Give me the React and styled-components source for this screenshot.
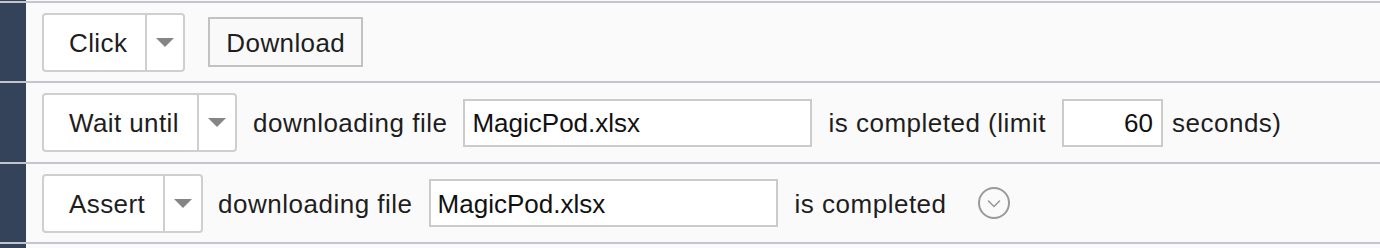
import React from "react";
import styled, { createGlobalStyle } from "styled-components";

const Global = createGlobalStyle`
  html, body { margin: 0; padding: 0; background: #fafafa; }
  body { font-family: "Liberation Sans", Arial, sans-serif; color: #222; overflow: hidden; }
`;

const Page = styled.div`
  display: flex;
  flex-direction: column;
  width: 1380px;
  height: 248px;
  overflow: hidden;
  background: #fafafa;
`;

const Row = styled.div`
  display: flex;
  flex: none;
  height: ${(p) => p.$h}px;
  box-sizing: border-box;
  border-top: ${(p) => (p.$line ? "2px solid #c3c7cc" : "none")};
`;

const Gutter = styled.div`
  width: 26px;
  flex: none;
  background: #34435a;
`;

const Content = styled.div`
  flex: 1;
  display: flex;
  align-items: center;
  gap: 16px;
  padding-left: 16px;
  background: #fafafa;
  font-size: 26px;
`;

const Select = styled.div`
  display: flex;
  align-items: stretch;
  height: 59px;
  box-sizing: border-box;
  border: 2px solid #cfcfcf;
  border-radius: 4px;
  background: #fff;
`;

const SelectLabel = styled.div`
  display: flex;
  align-items: center;
  padding: 2px 18px 0 25px;
  font-size: 26px;
  letter-spacing: 0.4px;
  color: #1e1e1e;
`;

const SelectArrow = styled.div`
  width: 36px;
  border-left: 2px solid #cfcfcf;
  display: flex;
  align-items: center;
  justify-content: center;
  &::after {
    content: "";
    display: block;
    border-left: 9px solid transparent;
    border-right: 9px solid transparent;
    border-top: 9px solid #858585;
  }
`;

const Button = styled.div`
  display: flex;
  align-items: center;
  height: 50px;
  box-sizing: border-box;
  padding: 2px 16px 0;
  border: 2px solid #c2c2c2;
  background: #f9f9f9;
  font-size: 26px;
  letter-spacing: 0.4px;
  color: #1e1e1e;
  margin-left: 7px;
`;

const Label = styled.span`
  font-size: 26px;
  letter-spacing: 0.5px;
  color: #1e1e1e;
  white-space: nowrap;
  padding-top: 2px;
  margin-left: ${(p) => p.$ml || 0}px;
`;

const Field = styled.div`
  display: flex;
  align-items: center;
  justify-content: ${(p) => (p.$right ? "flex-end" : "flex-start")};
  width: ${(p) => p.$w}px;
  height: 48px;
  box-sizing: border-box;
  padding: 2px 8px 0 7px;
  border: 2px solid #cbcbcb;
  background: #fff;
  font-size: 26px;
  color: #111;
`;

const IconBtn = styled.div`
  display: flex;
  margin-left: 15px;
`;

const CircleChevron = () => (
  <svg width="32" height="32" viewBox="0 0 32 32">
    <circle cx="16" cy="16" r="15" fill="none" stroke="#9a9a9a" strokeWidth="2" />
    <polyline
      points="10.5,14 16,19.5 21.5,14"
      fill="none"
      stroke="#9a9a9a"
      strokeWidth="1.6"
      strokeLinecap="round"
      strokeLinejoin="round"
    />
  </svg>
);

export default function App() {
  return (
    <Page>
      <Global />
      <Row $h={1}>
        <Gutter />
        <Content />
      </Row>
      <Row $h={80} $line>
        <Gutter />
        <Content>
          <Select>
            <SelectLabel>Click</SelectLabel>
            <SelectArrow />
          </Select>
          <Button>Download</Button>
        </Content>
      </Row>
      <Row $h={81} $line>
        <Gutter />
        <Content>
          <Select>
            <SelectLabel>Wait until</SelectLabel>
            <SelectArrow />
          </Select>
          <Label>downloading file</Label>
          <Field $w={349}>MagicPod.xlsx</Field>
          <Label>is completed (limit</Label>
          <Field $w={101} $right>60</Field>
          <Label $ml={-7}>seconds)</Label>
        </Content>
      </Row>
      <Row $h={80} $line>
        <Gutter />
        <Content>
          <Select>
            <SelectLabel>Assert</SelectLabel>
            <SelectArrow />
          </Select>
          <Label $ml={-1}>downloading file</Label>
          <Field $w={349}>MagicPod.xlsx</Field>
          <Label $ml={1}>is completed</Label>
          <IconBtn>
            <CircleChevron />
          </IconBtn>
        </Content>
      </Row>
      <Row $h={20} $line>
        <Gutter />
        <Content />
      </Row>
    </Page>
  );
}
